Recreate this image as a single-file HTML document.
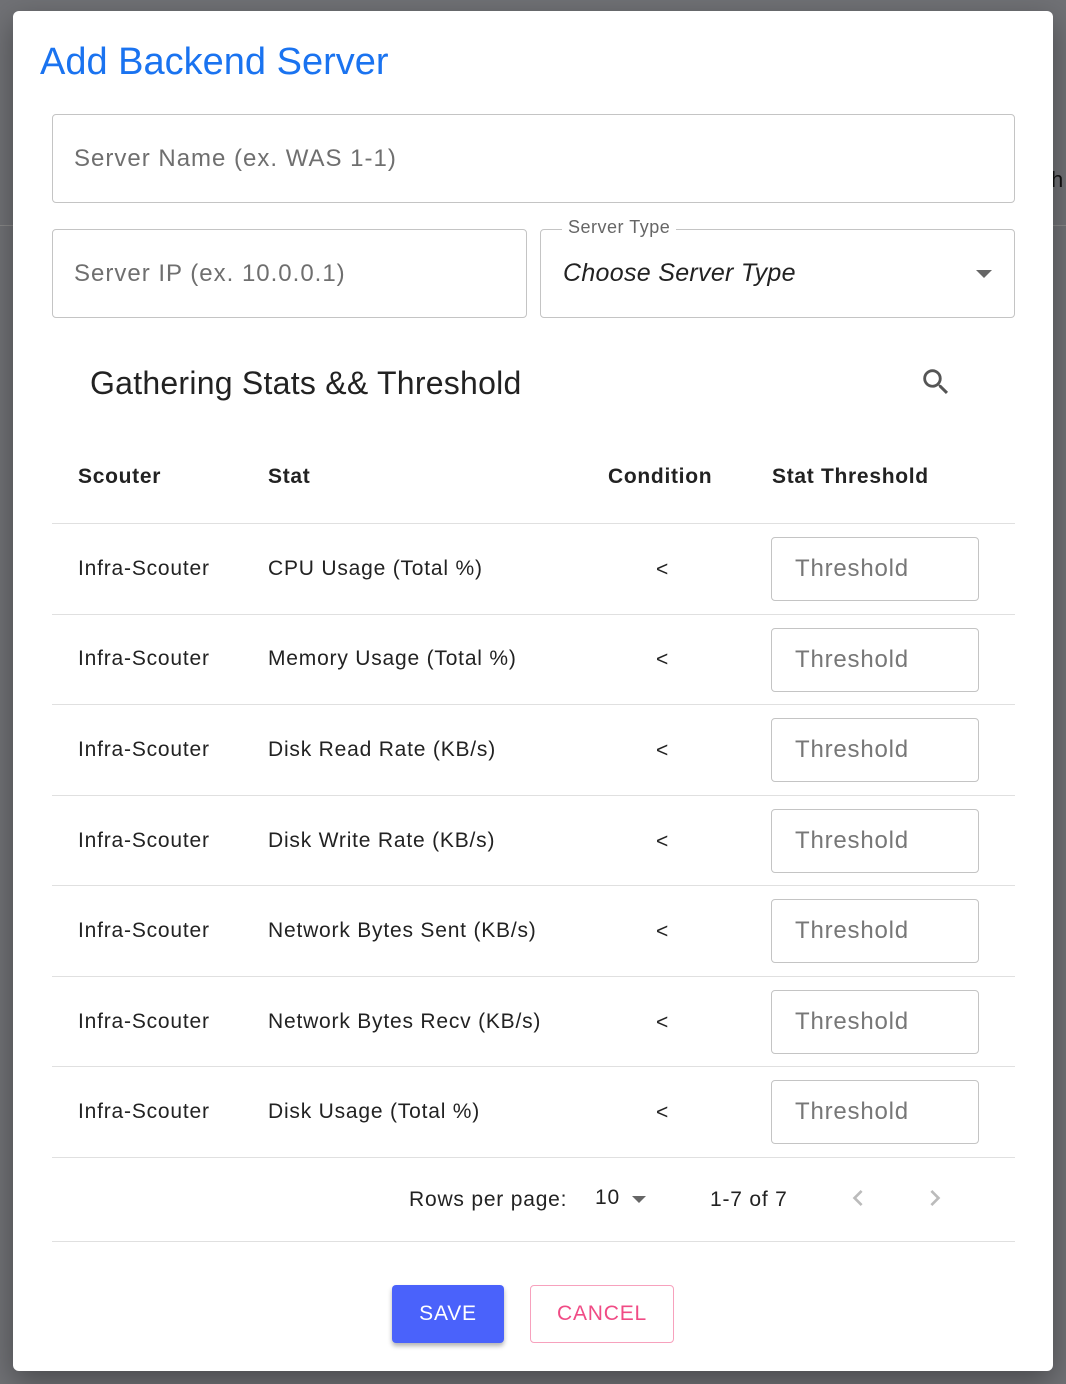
<!DOCTYPE html>
<html><head><meta charset="utf-8"><style>
*{box-sizing:border-box;margin:0;padding:0}
body{width:1066px;height:1384px;background:#707175;font-family:"Liberation Sans",sans-serif;position:relative;overflow:hidden}
.dlg{position:absolute;left:13px;top:11px;width:1040px;height:1360px;background:#fff;border-radius:6px;box-shadow:0 10px 30px rgba(0,0,0,.35)}
.a{position:absolute}
.title{left:27px;top:30px;font-size:38px;color:#1a73f0}
.box{border:1px solid #c4c4c4;border-radius:4px}
.ph{font-size:24px;color:#6f6f6f;letter-spacing:1px}
.hd{font-size:21px;font-weight:bold;color:#222;top:454px;letter-spacing:.7px}
.line{left:39px;width:963px;height:1px;background:#e0e0e0}
.cell{font-size:21px;color:#222;letter-spacing:.8px}
.th{font-size:24px;color:#777;position:absolute;left:758px;width:208px;height:64px;border:1px solid #c4c4c4;border-radius:4px;padding-left:23px;line-height:62px;letter-spacing:.8px}
</style></head><body>
<div class="a" style="left:0;top:225px;width:13px;height:1px;background:#888"></div>
<div class="a" style="left:1053px;top:225px;width:13px;height:1px;background:#888"></div>
<div class="a" style="left:1051px;top:167px;font-size:22px;color:#111">h</div>
<div class="dlg">
<div class="a title">Add Backend Server</div>
<div class="a box" style="left:39px;top:103px;width:963px;height:89px"></div>
<div class="a ph" style="left:61px;top:134px">Server Name (ex. WAS 1-1)</div>
<div class="a box" style="left:39px;top:218px;width:475px;height:89px"></div>
<div class="a ph" style="left:61px;top:249px">Server IP (ex. 10.0.0.1)</div>
<div class="a box" style="left:527px;top:218px;width:475px;height:89px"></div>
<div class="a" style="left:549px;top:206px;background:#fff;padding:0 6px;font-size:18px;color:#666;letter-spacing:.5px">Server Type</div>
<div class="a" style="left:550px;top:248px;font-size:25px;font-style:italic;color:#222;letter-spacing:.3px">Choose Server Type</div>
<div class="a" style="left:963px;top:259px;width:0;height:0;border-left:8px solid transparent;border-right:8px solid transparent;border-top:8px solid #666"></div>
<div class="a" style="left:77px;top:354px;font-size:32px;color:#222;letter-spacing:.25px">Gathering Stats &amp;&amp; Threshold</div>
<svg class="a" style="left:906px;top:354px" width="34" height="34" viewBox="0 0 24 24"><path fill="#555" d="M15.5 14h-.79l-.28-.27A6.47 6.47 0 0 0 16 9.5 6.5 6.5 0 1 0 9.5 16c1.61 0 3.09-.59 4.23-1.57l.27.28v.79l5 4.99L20.49 19l-4.99-5zm-6 0C7.01 14 5 11.99 5 9.5S7.01 5 9.5 5 14 7.01 14 9.5 11.99 14 9.5 14z"/></svg>
<div class="a hd" style="left:65px">Scouter</div>
<div class="a hd" style="left:255px">Stat</div>
<div class="a hd" style="left:595px">Condition</div>
<div class="a hd" style="left:759px">Stat Threshold</div>
<div class="a line" style="top:512px"></div>

<div class="a cell" style="left:65px;top:546px">Infra-Scouter</div><div class="a cell" style="left:255px;top:546px">CPU Usage (Total %)</div><div class="a cell" style="left:643px;top:547px">&lt;</div><div class="th" style="top:526px">Threshold</div>
<div class="a line" style="top:603px"></div>
<div class="a cell" style="left:65px;top:636px">Infra-Scouter</div><div class="a cell" style="left:255px;top:636px">Memory Usage (Total %)</div><div class="a cell" style="left:643px;top:637px">&lt;</div><div class="th" style="top:617px">Threshold</div>
<div class="a line" style="top:693px"></div>
<div class="a cell" style="left:65px;top:727px">Infra-Scouter</div><div class="a cell" style="left:255px;top:727px">Disk Read Rate (KB/s)</div><div class="a cell" style="left:643px;top:728px">&lt;</div><div class="th" style="top:707px">Threshold</div>
<div class="a line" style="top:784px"></div>
<div class="a cell" style="left:65px;top:818px">Infra-Scouter</div><div class="a cell" style="left:255px;top:818px">Disk Write Rate (KB/s)</div><div class="a cell" style="left:643px;top:819px">&lt;</div><div class="th" style="top:798px">Threshold</div>
<div class="a line" style="top:874px"></div>
<div class="a cell" style="left:65px;top:908px">Infra-Scouter</div><div class="a cell" style="left:255px;top:908px">Network Bytes Sent (KB/s)</div><div class="a cell" style="left:643px;top:909px">&lt;</div><div class="th" style="top:888px">Threshold</div>
<div class="a line" style="top:965px"></div>
<div class="a cell" style="left:65px;top:999px">Infra-Scouter</div><div class="a cell" style="left:255px;top:999px">Network Bytes Recv (KB/s)</div><div class="a cell" style="left:643px;top:1000px">&lt;</div><div class="th" style="top:979px">Threshold</div>
<div class="a line" style="top:1055px"></div>
<div class="a cell" style="left:65px;top:1089px">Infra-Scouter</div><div class="a cell" style="left:255px;top:1089px">Disk Usage (Total %)</div><div class="a cell" style="left:643px;top:1090px">&lt;</div><div class="th" style="top:1069px">Threshold</div>
<div class="a line" style="top:1146px"></div>

<div class="a cell" style="left:396px;top:1177px">Rows per page:</div>
<div class="a cell" style="left:582px;top:1175px">10</div>
<div class="a" style="left:619px;top:1185px;width:0;height:0;border-left:7px solid transparent;border-right:7px solid transparent;border-top:7px solid #666"></div>
<div class="a cell" style="left:697px;top:1177px">1-7 of 7</div>
<svg class="a" style="left:829px;top:1171px" width="32" height="32" viewBox="0 0 24 24"><path fill="#bbb" d="M15.41 7.41 14 6l-6 6 6 6 1.41-1.41L10.83 12z"/></svg>
<svg class="a" style="left:906px;top:1171px" width="32" height="32" viewBox="0 0 24 24"><path fill="#bbb" d="M10 6 8.59 7.41 13.17 12l-4.58 4.59L10 18l6-6z"/></svg>
<div class="a line" style="top:1230px"></div>

<div class="a" style="left:379px;top:1274px;width:112px;height:58px;background:#4a62fb;border-radius:4px;box-shadow:0 3px 5px rgba(0,0,0,.3);color:#fff;font-size:21px;text-align:center;line-height:58px;letter-spacing:.8px">SAVE</div>
<div class="a" style="left:517px;top:1274px;width:144px;height:58px;border:1px solid #f7a1bd;border-radius:4px;color:#f04b85;font-size:21px;text-align:center;line-height:56px;letter-spacing:.8px">CANCEL</div>
</div>
</body></html>
